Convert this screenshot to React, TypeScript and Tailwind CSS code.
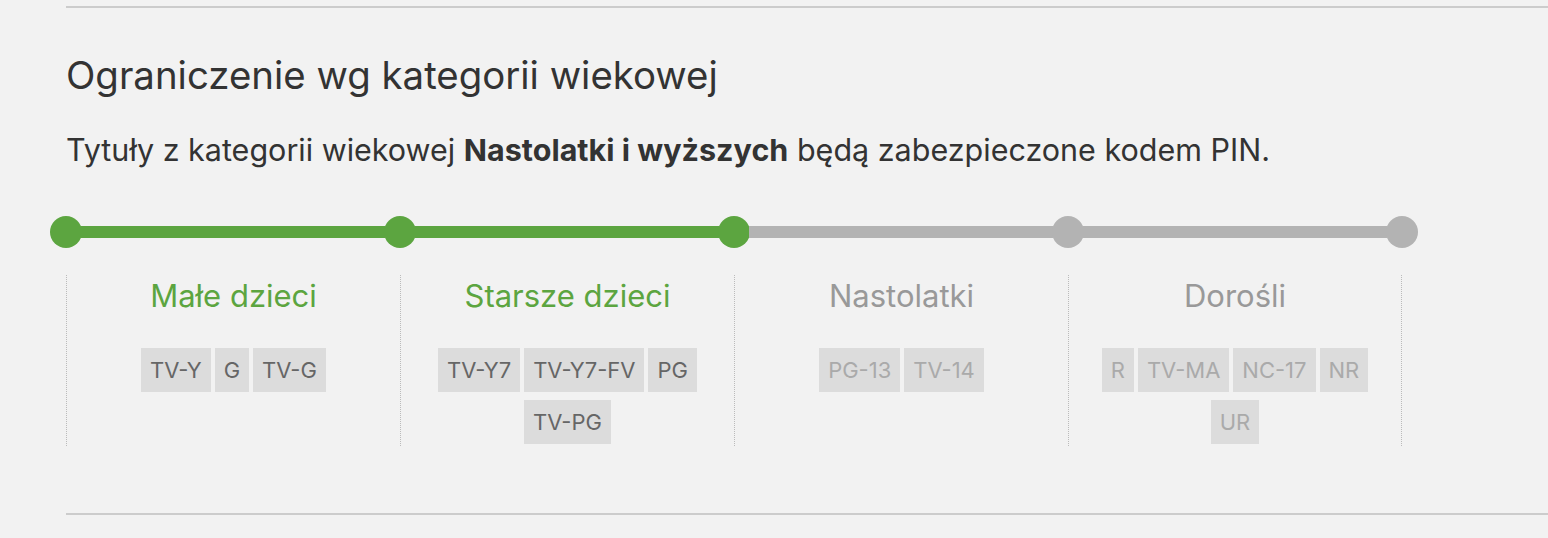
import React from "react";

type Group = {
  label: string;
  active: boolean;
  rows: string[][];
};

const groups: Group[] = [
  { label: "Małe dzieci", active: true, rows: [["TV-Y", "G", "TV-G"]] },
  { label: "Starsze dzieci", active: true, rows: [["TV-Y7", "TV-Y7-FV", "PG"], ["TV-PG"]] },
  { label: "Nastolatki", active: false, rows: [["PG-13", "TV-14"]] },
  { label: "Dorośli", active: false, rows: [["R", "TV-MA", "NC-17", "NR"], ["UR"]] },
];

// 5 stops, the first three are "on"
const stops = [true, true, true, false, false];

export default function App() {
  return (
    <div className="min-h-screen w-full bg-[#f2f2f2] pl-[66px] pt-[6px] font-['Inter','Liberation_Sans',sans-serif] text-[#333]">
      <div className="border-t-2 border-[#cccccc]">
        <h2 className="mt-[45px] text-[38.4px] leading-[44px] font-normal">
          Ograniczenie wg kategorii wiekowej
        </h2>
        <p className="mt-[35px] text-[30.5px] leading-[36px]">
          Tytuły z kategorii wiekowej <b className="font-bold">Nastolatki i wyższych</b> będą
          zabezpieczone kodem PIN.
        </p>

        {/* suwak */}
        <div className="ml-[-16px] mt-[48px] flex w-[1368px] items-center">
          {stops.map((on, i) => (
            <React.Fragment key={i}>
              <div
                className={`h-8 w-8 shrink-0 rounded-full ${on ? "bg-[#5ca540]" : "bg-[#b3b3b3]"}`}
              />
              {i < stops.length - 1 && (
                <div
                  className={`mx-[-1px] h-3 flex-1 ${stops[i + 1] ? "bg-[#5ca540]" : "bg-[#b3b3b3]"}`}
                />
              )}
            </React.Fragment>
          ))}
        </div>

        {/* kategorie */}
        <div className="mt-[27px] flex w-[1336px]">
          {groups.map((g, i) => (
            <div
              key={g.label}
              className={`flex h-[171px] w-[334px] flex-col items-center border-l border-dotted border-[#bbbbbb] ${
                i === groups.length - 1 ? "border-r" : ""
              }`}
            >
              <div
                className={`mt-[3px] text-[31px] leading-[36px] ${g.active ? "text-[#5ca540]" : "text-[#999999]"}`}
              >
                {g.label}
              </div>
              <div className="mt-[34px] flex flex-col items-center gap-2">
                {g.rows.map((row, r) => (
                  <div key={r} className="flex gap-1">
                    {row.map((b) => (
                      <span
                        key={b}
                        className={`flex h-11 items-center bg-[#dcdcdc] px-[9px] text-[22px] ${
                          g.active ? "text-[#666666]" : "text-[#aaaaaa]"
                        }`}
                      >
                        {b}
                      </span>
                    ))}
                  </div>
                ))}
              </div>
            </div>
          ))}
        </div>

        <div className="mt-[67px] border-t-2 border-[#cccccc]" />
      </div>
    </div>
  );
}
